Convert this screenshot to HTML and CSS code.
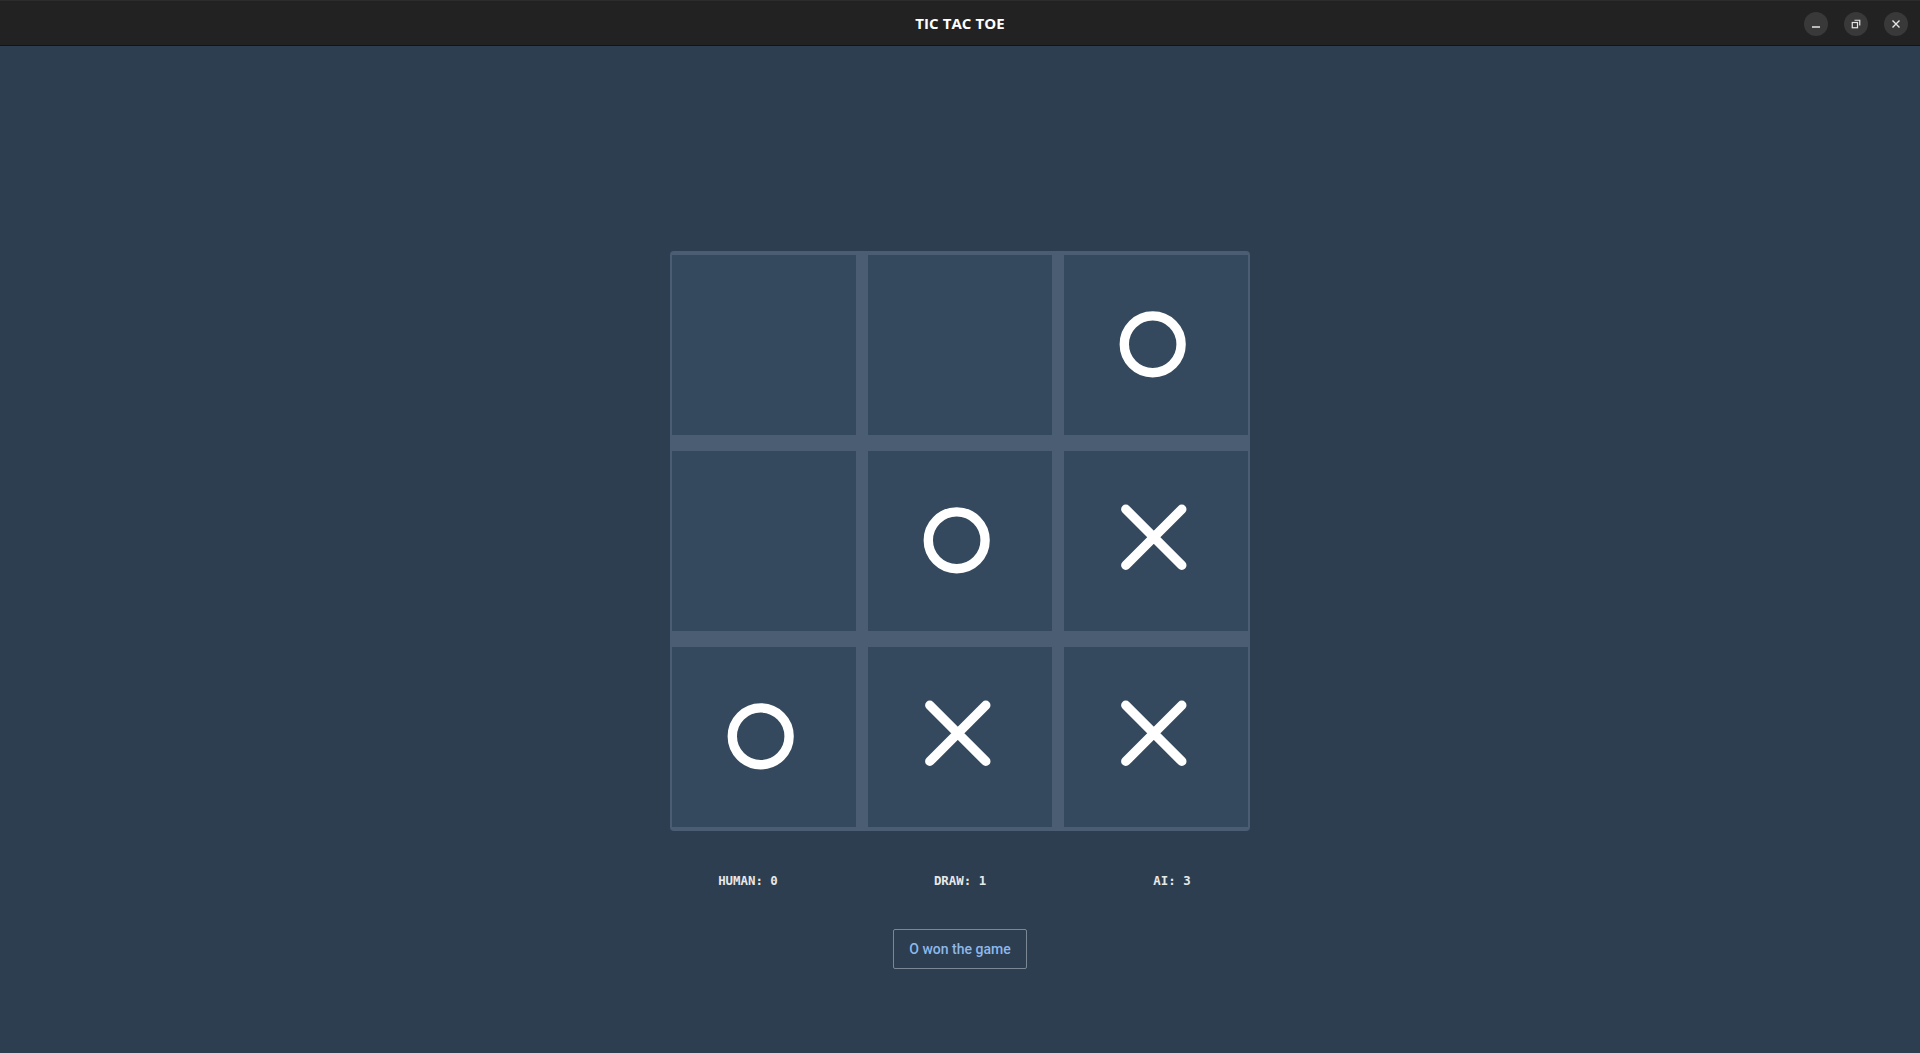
FILE: index.html
```html
<!DOCTYPE html>
<html>
<head>
<meta charset="utf-8">
<title>Tic Tac Toe</title>
<link rel="stylesheet" href="styles.css">
</head>
<body>
<header class="titlebar">
  <div class="title">TIC TAC TOE</div>
  <div class="controls">
    <span class="ctl"><svg width="10" height="10" viewBox="0 0 10 10"><path d="M1 8h8" stroke="#e6e6e6" stroke-width="1.5"/></svg></span>
    <span class="ctl"><svg width="10" height="10" viewBox="0 0 10 10"><path d="M3.5 1.25h5.25v5.25" fill="none" stroke="#e6e6e6" stroke-width="1.2"/><rect x="1.25" y="3.5" width="5.25" height="5.25" fill="none" stroke="#e6e6e6" stroke-width="1.2"/></svg></span>
    <span class="ctl"><svg width="10" height="10" viewBox="0 0 10 10"><path d="M1.5 1.5l7 7M8.5 1.5l-7 7" stroke="#e6e6e6" stroke-width="1.4"/></svg></span>
  </div>
</header>
<main class="main">
  <div class="board">
    <div class="cell"></div>
    <div class="cell"></div>
    <div class="cell"><svg class="mark" viewBox="-50 -50 100 100"><circle cx="-3.3" cy="-0.7" r="28.4" /></svg></div>
    <div class="cell"></div>
    <div class="cell"><svg class="mark" viewBox="-50 -50 100 100"><circle cx="-3.3" cy="-0.7" r="28.4" /></svg></div>
    <div class="cell"><svg class="mark" viewBox="-50 -50 100 100"><path d="M-30.2 -31.7L25.8 24.3M25.8 -31.7L-30.2 24.3" /></svg></div>
    <div class="cell"><svg class="mark" viewBox="-50 -50 100 100"><circle cx="-3.3" cy="-0.7" r="28.4" /></svg></div>
    <div class="cell"><svg class="mark" viewBox="-50 -50 100 100"><path d="M-30.2 -31.7L25.8 24.3M25.8 -31.7L-30.2 24.3" /></svg></div>
    <div class="cell"><svg class="mark" viewBox="-50 -50 100 100"><path d="M-30.2 -31.7L25.8 24.3M25.8 -31.7L-30.2 24.3" /></svg></div>
  </div>
  <div class="scores">
    <span class="score">HUMAN: 0</span>
    <span class="score">DRAW: 1</span>
    <span class="score">AI: 3</span>
  </div>
  <button class="status">O won the game</button>
</main>
</body>
</html>
```
FILE: styles.css
```css
html, body {
  margin: 0;
  padding: 0;
}
body {
  background: #2c3e50;
  height: 1053px;
  overflow: hidden;
  font-family: "Open Sans", "DejaVu Sans", sans-serif;
}
.titlebar {
  background: #222222;
  border-top: 1px solid #2c2c2c;
  border-bottom: 1px solid #141414;
  box-sizing: border-box;
  height: 46px;
  position: relative;
  display: flex;
  align-items: center;
  justify-content: center;
}
.title {
  color: #ffffff;
  font-weight: 700;
  font-size: 15px;
  letter-spacing: 0.1px;
}
.controls {
  position: absolute;
  right: 12px;
  top: 11px;
  display: flex;
  gap: 16px;
}
.ctl {
  width: 24px;
  height: 24px;
  border-radius: 50%;
  background: #393939;
  display: flex;
  align-items: center;
  justify-content: center;
}
.main {
  display: flex;
  flex-direction: column;
  align-items: center;
  padding-top: 205px;
}
.board {
  width: 580px;
  height: 580px;
  box-sizing: border-box;
  padding: 4px 2px;
  background: #4a5d73;
  border-radius: 4px;
  display: grid;
  grid-template-columns: repeat(3, 184px);
  grid-template-rows: repeat(3, 180px);
  column-gap: 12px;
  row-gap: 16px;
}
.cell {
  background: #34495e;
  display: flex;
  align-items: center;
  justify-content: center;
}
.mark {
  width: 100px;
  height: 100px;
}
.mark circle, .mark path {
  fill: none;
  stroke: #ffffff;
  stroke-width: 9.4;
  stroke-linecap: round;
}
.scores {
  margin-top: 42px;
  display: grid;
  grid-template-columns: repeat(3, 212px);
  justify-items: center;
}
.score {
  font-family: "DejaVu Sans Mono", "Liberation Mono", monospace;
  font-weight: 700;
  font-size: 12.4px;
  line-height: 16px;
  color: #e8e8e8;
}
.status {
  margin-top: 40px;
  width: 134px;
  height: 40px;
  box-sizing: border-box;
  background: transparent;
  border: 1px solid #7b8794;
  border-radius: 2px;
  color: #8fb8ea;
  font-family: Roboto, "Noto Sans", sans-serif;
  font-weight: 500;
  font-size: 14px;
  padding: 0;
}
```
